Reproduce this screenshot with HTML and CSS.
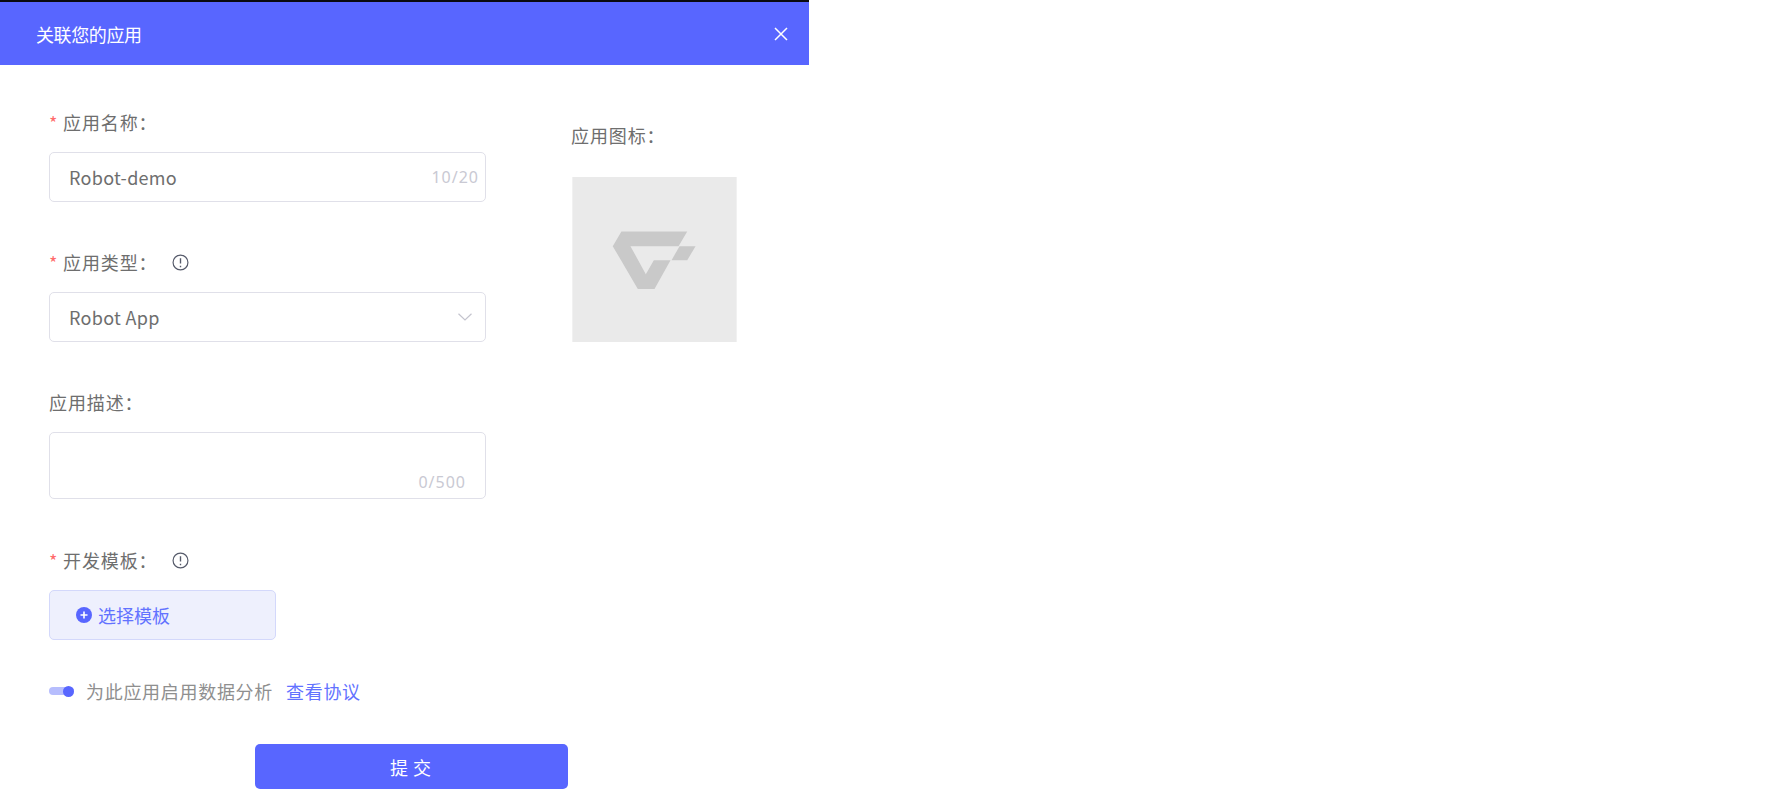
FILE: index.html
```html
<!DOCTYPE html>
<html lang="zh">
<head>
<meta charset="utf-8">
<title>关联您的应用</title>
<link rel="stylesheet" href="styles.css">
</head>
<body>
<div class="modal">
  <header class="head">
    <h1 class="title">关联您的应用</h1>
    <svg class="close" viewBox="0 0 14 14"><path d="M1 1L13 13M13 1L1 13"/></svg>
  </header>
  <div class="content">
    <div class="left">
      <div class="field">
        <div class="label"><span class="star">*</span>应用名称：</div>
        <div class="box"><span class="val">Robot-demo</span><span class="count">10/20</span></div>
      </div>
      <div class="field">
        <div class="label"><span class="star">*</span>应用类型：<svg class="info" viewBox="0 0 16 16"><circle cx="8" cy="8" r="7"/><path d="M8 4v5M8 11v1.4"/></svg></div>
        <div class="box"><span class="val">Robot App</span><svg class="chev" viewBox="0 0 14 8"><path d="M.5.8L7 7L13.500.8"/></svg></div>
      </div>
      <div class="field">
        <div class="label">应用描述：</div>
        <div class="box area"><span class="count">0/500</span></div>
      </div>
      <div class="field">
        <div class="label"><span class="star">*</span>开发模板：<svg class="info" viewBox="0 0 16 16"><circle cx="8" cy="8" r="7"/><path d="M8 4v5M8 11v1.4"/></svg></div>
        <div class="pick"><svg class="plus" viewBox="0 0 16 16"><circle cx="8" cy="8" r="8"/><path d="M4.500 8h7M8 4.500v7"/></svg>选择模板</div>
      </div>
      <div class="agree">
        <span class="toggle"><span class="knob"></span></span>
        <span class="agree-text">为此应用启用数据分析</span>
        <span class="link">查看协议</span>
      </div>
      <div class="submit">提交</div>
    </div>
    <div class="right">
      <div class="label">应用图标：</div>
      <svg class="logo" viewBox="36 21 492 494">
        <rect x="36" y="21" width="492" height="494" fill="#eaeaea"/>
        <polygon fill="#c9c9c9" points="157,228 183,184 380,184 354,228 210,228 256,312 280,270 330,270 282,356 232,356"/>
        <polygon fill="#c9c9c9" points="357,228 405,228 380,270 333,270"/>
      </svg>
    </div>
  </div>
</div>
</body>
</html>
```
FILE: styles.css
```css
* { box-sizing: border-box; }
html, body { margin: 0; padding: 0; background: #fff; }
body {
  font-family: "Noto Sans CJK SC", "Noto Sans", sans-serif;
  color: #6e6e6e;
}
.modal {
  width: 809px;
  height: 803px;
  border-top: 2px solid #0a0a0f;
}
.head {
  height: 62.500px;
  background: #5866ff;
  display: flex;
  align-items: center;
  justify-content: space-between;
  padding: 1px 21px 0 36px;
}
.title {
  margin: 0;
  font-size: 18px;
  font-weight: 400;
  color: #fff;
  letter-spacing: -0.4px;
}
.close { width: 14px; height: 14px; }
.close path { stroke: #fff; stroke-width: 1.5; fill: none; }
.content {
  display: flex;
  padding: 42.500px 0 0 49px;
}
.left { width: 522px; }
.field { margin-bottom: 45px; }
.field:nth-child(3) { margin-bottom: 46px; }
.field:nth-child(4) { margin-bottom: 37px; }
.label {
  height: 30px;
  line-height: 30px;
  font-size: 18px;
  letter-spacing: 0.9px;
  margin-bottom: 15px;
  display: flex;
  align-items: center;
}
.star {
  color: #ff6b6b;
  width: 14px;
  font-size: 18px;
  letter-spacing: 0;
}
.info { width: 17px; height: 17px; margin-left: 14px; }
.info circle { fill: none; stroke: #555a6a; stroke-width: 1.1; }
.info path { fill: none; stroke: #555a6a; stroke-width: 1.3; }
.box {
  width: 437px;
  height: 50px;
  border: 1.5px solid #e0e0e9;
  border-radius: 5px;
  padding: 0 6px 0 19px;
  display: flex;
  align-items: center;
  justify-content: space-between;
}
.val { font-size: 18px; color: #6e6e6e; letter-spacing: 0.3px; }
.count {
  font-size: 16px;
  color: #c9c9d3;
  letter-spacing: 1px;
  font-family: "Noto Sans", sans-serif;
}
.chev { width: 14px; height: 8px; margin-right: 7px; }
.chev path { fill: none; stroke: #c4c4ce; stroke-width: 1.2; }
.area {
  height: 67px;
  align-items: flex-end;
  justify-content: flex-end;
  padding: 0 19px 5px 0;
}
.pick {
  width: 227px;
  height: 50px;
  background: #eef0fd;
  border: 1.5px solid #d3d8fb;
  border-radius: 5px;
  padding-left: 26px;
  display: flex;
  align-items: center;
  gap: 6px;
  font-size: 18px;
  color: #6272ff;
}
.plus { width: 16px; height: 16px; }
.plus circle { fill: #5866ff; }
.plus path { stroke: #fff; stroke-width: 1.6; fill: none; }
.agree {
  display: flex;
  align-items: center;
  height: 28px;
  font-size: 18px;
  letter-spacing: 0.7px;
}
.toggle {
  width: 25px;
  height: 8px;
  border-radius: 4px;
  background: #b6bdfd;
  position: relative;
  margin-right: 12px;
}
.knob {
  position: absolute;
  right: 0;
  top: -1.5px;
  width: 11px;
  height: 11px;
  border-radius: 50%;
  background: #5866ff;
}
.agree-text { color: #8f8f8f; }
.link { color: #6272ff; margin-left: 13px; }
.submit {
  margin: 39px 0 0 206px;
  width: 313px;
  height: 45px;
  background: #5866ff;
  border-radius: 5px;
  color: #fff;
  font-size: 18px;
  letter-spacing: 5px;
  padding-left: 3px;
  display: flex;
  align-items: center;
  justify-content: center;
}
.right { padding-top: 13px; }
.right .label { margin-bottom: 27px; }
.right .logo { display: block; width: 165px; height: 165px; margin-left: 1px; }
```
